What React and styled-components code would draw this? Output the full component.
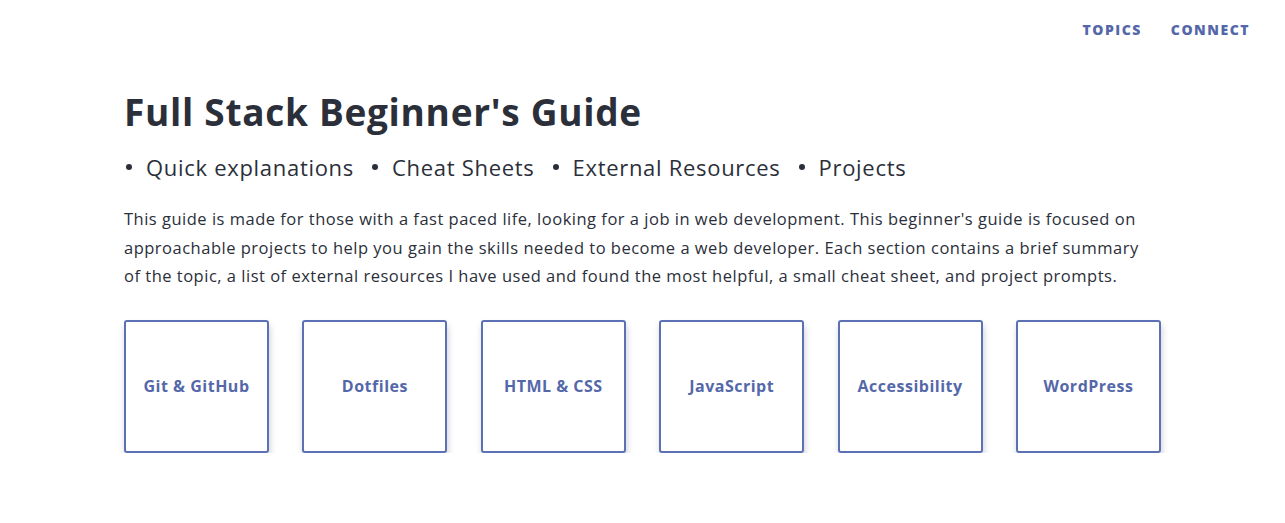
import React from "react";
import styled, { createGlobalStyle } from "styled-components";

const Global = createGlobalStyle`
  html, body { margin: 0; padding: 0; background: #ffffff; }
  body { font-family: "Open Sans", "DejaVu Sans", sans-serif; color: #2b2f3a; }
  * { box-sizing: border-box; }
`;

const Header = styled.header`
  display: flex;
  justify-content: flex-end;
  padding: 20px 35px 0 0;
  height: 58px;
`;

const Nav = styled.nav`
  display: flex;
  gap: 29px;
`;

const NavLink = styled.a`
  font-size: 14px;
  font-weight: 800;
  letter-spacing: 1.5px;
  color: #5468a9;
  text-decoration: none;
  line-height: 20px;
`;

const Main = styled.main`
  width: 1037px;
  margin: 0 auto;
`;

const Title = styled.h1`
  margin: 30px 0 0;
  font-size: 37px;
  font-weight: 700;
  letter-spacing: 0.7px;
  line-height: 48px;
  color: #2b2f3a;
`;

const Features = styled.ul`
  display: flex;
  margin: 16px 0 0;
  padding: 0;
  list-style: none;
  gap: 16px;
`;

const Feature = styled.li`
  display: flex;
  align-items: center;
  font-size: 22px;
  letter-spacing: 0.7px;
  line-height: 30px;
  color: #2b2f3a;
  &::before {
    content: "";
    width: 6px;
    height: 6px;
    border-radius: 50%;
    background: #2b2f3a;
    margin: 0 14px 0 2px;
  }
`;

const Intro = styled.p`
  max-width: 1025px;
  margin: 23px 0 0;
  font-size: 16.5px;
  letter-spacing: 0.5px;
  line-height: 28.5px;
  color: #2b2f3a;
`;

const Cards = styled.div`
  display: flex;
  justify-content: space-between;
  margin-top: 29px;
`;

const Card = styled.a`
  display: flex;
  align-items: center;
  justify-content: center;
  width: 145px;
  height: 133px;
  border: 2px solid #5b71b3;
  border-radius: 3px;
  box-shadow: 1px 5px 6px rgba(60, 70, 100, 0.25);
  font-size: 16px;
  font-weight: 700;
  letter-spacing: 0.5px;
  color: #5468a9;
  text-decoration: none;
  background: #fff;
`;

const topics = ["Git & GitHub", "Dotfiles", "HTML & CSS", "JavaScript", "Accessibility", "WordPress"];
const features = ["Quick explanations", "Cheat Sheets", "External Resources", "Projects"];

export default function App() {
  return (
    <>
      <Global />
      <Header>
        <Nav>
          <NavLink href="#">TOPICS</NavLink>
          <NavLink href="#">CONNECT</NavLink>
        </Nav>
      </Header>
      <Main>
        <Title>Full Stack Beginner's Guide</Title>
        <Features>
          {features.map((f) => (
            <Feature key={f}>{f}</Feature>
          ))}
        </Features>
        <Intro>
          This guide is made for those with a fast paced life, looking for a job in web development. This beginner's guide is focused on approachable projects to help you gain the skills needed to become a web developer. Each section contains a brief summary of the topic, a list of external resources I have used and found the most helpful, a small cheat sheet, and project prompts.
        </Intro>
        <Cards>
          {topics.map((t) => (
            <Card key={t} href="#">{t}</Card>
          ))}
        </Cards>
      </Main>
    </>
  );
}
